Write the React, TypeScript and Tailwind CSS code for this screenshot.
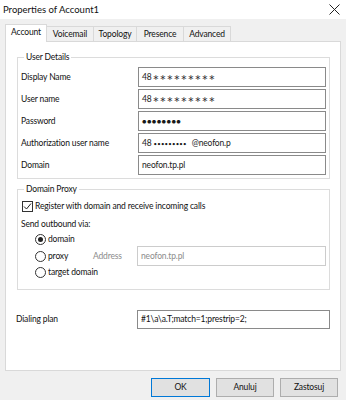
import * as React from "react";

const inputBox =
  "flex h-[20px] flex-1 items-center border border-[#8a8a8a] bg-white pl-[3px] text-[#1a1a1a]";

function Field({ label, children }: { label: string; children: React.ReactNode }) {
  return (
    <div className="flex h-[20px] items-center">
      <span className="w-[117px] shrink-0">{label}</span>
      <div className={inputBox}>{children}</div>
    </div>
  );
}

function Stars() {
  return (
    <span className="ml-[1px] font-['DejaVu_Sans',sans-serif] text-[8px] tracking-[0.3px] text-[#333]">
      ∗∗∗∗∗∗∗∗∗
    </span>
  );
}

function Radio({ checked, label }: { checked?: boolean; label: string }) {
  return (
    <div className="flex items-center gap-[2px]">
      <span className="flex h-[11px] w-[11px] items-center justify-center rounded-full border border-[#333] bg-white">
        {checked && <span className="h-[5px] w-[5px] rounded-full bg-[#222]" />}
      </span>
      <span>{label}</span>
    </div>
  );
}

function Tab({ label, width, active }: { label: string; width: string; active?: boolean }) {
  if (active) {
    return (
      <div
        className={`relative z-10 -mb-px flex h-[18px] items-start justify-center border border-b-0 border-[#d9d9d9] bg-white pt-[1px] ${width}`}
      >
        {label}
      </div>
    );
  }
  return (
    <div
      className={`flex h-[15px] items-center justify-center border border-b-0 border-l-0 border-[#d9d9d9] bg-[#f0f0f0] ${width}`}
    >
      {label}
    </div>
  );
}

export default function App() {
  return (
    <div className="h-[400px] w-[346px] overflow-hidden bg-[#f0f0f0] font-['Lato',sans-serif] text-[8.5px] leading-[13px] tracking-[-0.15px] text-[#111]">
      {/* title bar */}
      <div className="flex h-[19px] items-center justify-between bg-white pl-[3px] pr-[6px]">
        <span className="text-[9.5px] tracking-normal">Properties of Account1</span>
        <svg width="11" height="11" viewBox="0 0 11 11">
          <path d="M0.5 0.5 L10.5 10.5 M10.5 0.5 L0.5 10.5" stroke="#222" strokeWidth="1" />
        </svg>
      </div>

      <div className="ml-[5px] w-[336px] pt-[5px]">
        <div className="flex h-[17px] items-end">
          <Tab label="Account" width="w-[42px]" active />
          <Tab label="Voicemail" width="w-[47px]" />
          <Tab label="Topology" width="w-[43px]" />
          <Tab label="Presence" width="w-[47px]" />
          <Tab label="Advanced" width="w-[47px]" />
        </div>

        <div className="h-[330px] border border-[#d9d9d9] bg-white pl-[11px] pr-[10px] pt-[8px]">
          <fieldset className="border border-[#dcdcdc] px-[3px] pb-[3px]">
            <legend className="ml-[3px] px-[2px] leading-[14px]">User Details</legend>
            <div className="flex flex-col gap-[2px] pt-[3px]">
              <Field label="Display Name">
                <span>48</span>
                <Stars />
              </Field>
              <Field label="User name">
                <span>48</span>
                <Stars />
              </Field>
              <Field label="Password">
                <span className="text-[7.5px] tracking-[0.4px]">●●●●●●●●</span>
              </Field>
              <Field label="Authorization user name">
                <span>48</span>
                <span className="ml-[2px] text-[6px] tracking-[0.2px]">•••••••••</span>
                <span className="ml-[5px]">@neofon.p</span>
              </Field>
              <Field label="Domain">neofon.tp.pl</Field>
            </div>
          </fieldset>

          <fieldset className="mt-[3px] border border-[#dcdcdc] pb-[10px] pl-[3px] pr-[3px]">
            <legend className="ml-[3px] px-[2px] leading-[14px]">Domain Proxy</legend>
            <div className="mt-[4px] flex h-[13px] items-center gap-[2px] pl-[1px]">
              <span className="flex h-[11px] w-[11px] items-center justify-center border border-[#333] bg-white">
                <svg width="9" height="9" viewBox="0 0 9 9">
                  <path d="M1 4.5 L3.5 7 L8 1.5" fill="none" stroke="#222" strokeWidth="1" />
                </svg>
              </span>
              <span>Register with domain and receive incoming calls</span>
            </div>
            <div className="mt-[5px] flex h-[13px] items-center">Send outbound via:</div>
            <div className="mt-[2px] flex h-[13px] items-center pl-[14px]">
              <Radio checked label="domain" />
            </div>
            <div className="flex h-[20px] items-center pl-[14px]">
              <div className="w-[58px] shrink-0">
                <Radio label="proxy" />
              </div>
              <span className="w-[44px] shrink-0 text-[#8c8c8c]">Address</span>
              <div className="flex h-[20px] flex-1 items-center border border-[#cccccc] bg-white pl-[3px] text-[#8c8c8c]">
                neofon.tp.pl
              </div>
            </div>
            <div className="flex h-[13px] items-center pl-[14px]">
              <Radio label="target domain" />
            </div>
          </fieldset>

          <div className="-ml-[1px] mt-[20px] flex h-[19px] items-center">
            <span className="w-[121px] shrink-0">Dialing plan</span>
            <div className="flex h-[19px] w-[193px] items-center border border-[#8a8a8a] bg-white pl-[3px]">
              #1\a\a.T;match=1;prestrip=2;
            </div>
          </div>
        </div>
      </div>

      <div className="mt-[7px] flex justify-end gap-[6px] pr-[8px]">
        <button className="h-[19px] w-[59px] border border-[#0078d7] bg-[#e1e1e1]">OK</button>
        <button className="h-[19px] w-[58px] border border-[#adadad] bg-[#e1e1e1]">Anuluj</button>
        <button className="h-[19px] w-[58px] border border-[#adadad] bg-[#e1e1e1]">Zastosuj</button>
      </div>
    </div>
  );
}
